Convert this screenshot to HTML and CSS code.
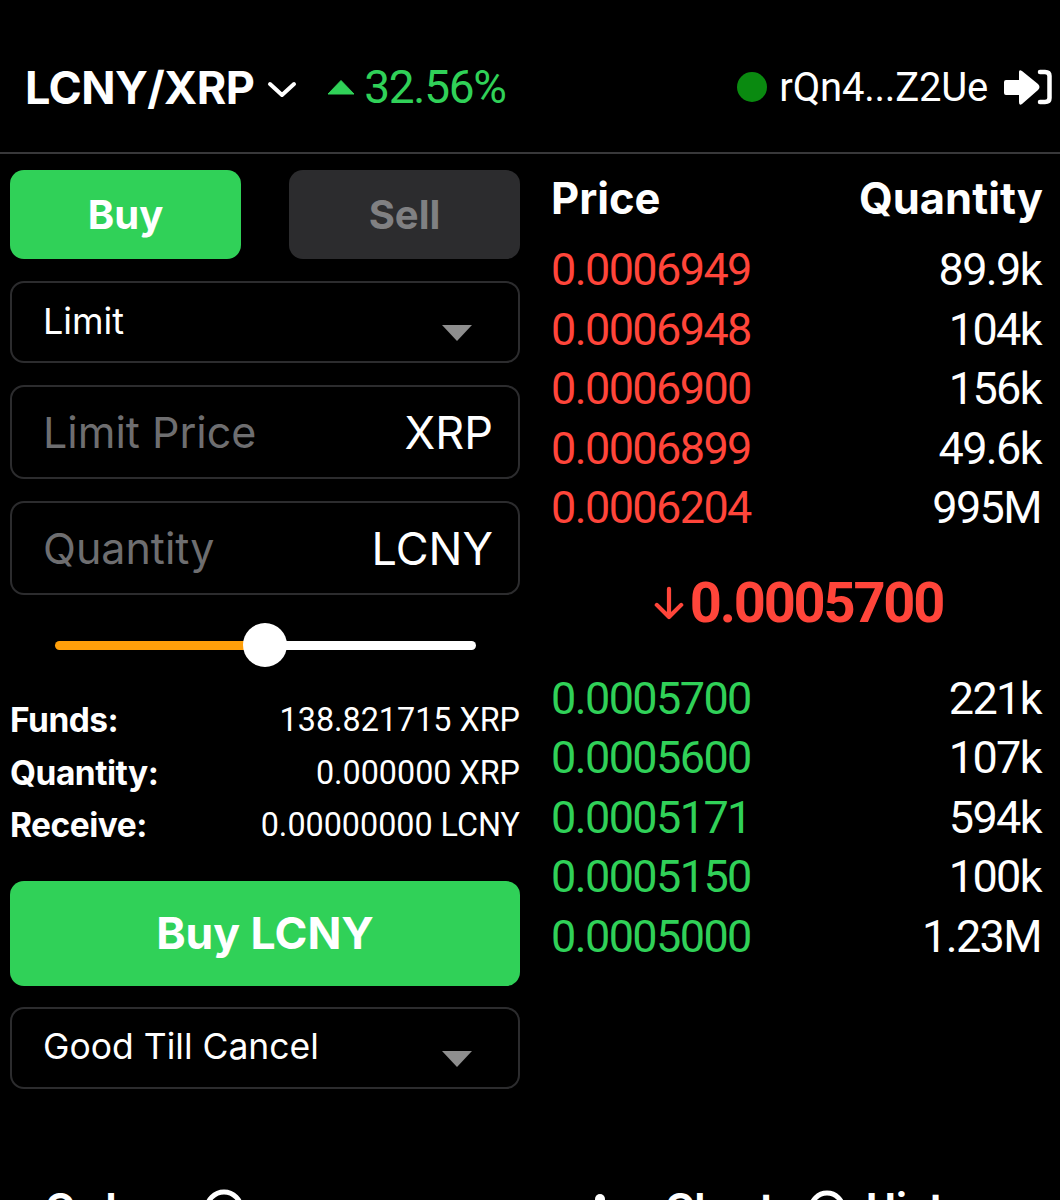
FILE: index.html
```html
<!DOCTYPE html>
<html>
<head>
<meta charset="utf-8">
<title>LCNY/XRP</title>
<link rel="stylesheet" href="styles.css">
</head>
<body>
<header class="topbar">
  <div class="pair">LCNY/XRP</div>
  <svg class="pair-caret" width="30" height="18" viewBox="0 0 30 18"><path d="M3 4 L15 15 L27 4" fill="none" stroke="#fff" stroke-width="4" stroke-linecap="round" stroke-linejoin="round"/></svg>
  <svg class="up-tri" width="28" height="16" viewBox="0 0 28 16"><path d="M14 1.5 L27 15 H1 Z" fill="#30d158" stroke="#30d158" stroke-linejoin="round"/></svg>
  <div class="change">32.56%</div>
  <div class="wallet">
    <span class="dot"></span>
    <span class="addr">rQn4...Z2Ue</span>
    <svg class="logout" width="48" height="36" viewBox="0 0 48 36"><path d="M2 11 H15 V3 Q15 0 18 2 L34 15 Q37 18 34 21 L18 35 Q15 37 15 33 V26 H2 Q0 26 0 24 V13 Q0 11 2 11 Z" fill="#fff"/><path d="M36 3 H41 Q45.500 3 45.500 7 V29 Q45.500 33 41 33 H36" fill="none" stroke="#fff" stroke-width="4.500" stroke-linecap="round"/></svg>
  </div>
</header>

<main class="layout">
  <section class="form">
    <div class="tabs">
      <button class="tab tab-buy">Buy</button>
      <button class="tab tab-sell">Sell</button>
    </div>
    <div class="select select-type"><span>Limit</span><i class="select-arrow"></i></div>
    <div class="field"><span class="placeholder">Limit Price</span><span class="unit">XRP</span></div>
    <div class="field"><span class="placeholder">Quantity</span><span class="unit">LCNY</span></div>
    <div class="slider">
      <div class="track-on"></div>
      <div class="thumb"></div>
      <div class="track-off"></div>
    </div>
    <dl class="summary">
      <div class="summary-row"><dt>Funds:</dt><dd>138.821715 XRP</dd></div>
      <div class="summary-row"><dt>Quantity:</dt><dd>0.000000 XRP</dd></div>
      <div class="summary-row"><dt>Receive:</dt><dd>0.00000000 LCNY</dd></div>
    </dl>
    <button class="submit">Buy LCNY</button>
    <div class="select select-tif"><span>Good Till Cancel</span><i class="select-arrow"></i></div>
  </section>

  <section class="book">
    <div class="book-head"><span>Price</span><span>Quantity</span></div>
    <ul class="rows asks">
      <li><span>0.0006949</span><b>89.9k</b></li>
      <li><span>0.0006948</span><b>104k</b></li>
      <li><span>0.0006900</span><b>156k</b></li>
      <li><span>0.0006899</span><b>49.6k</b></li>
      <li><span>0.0006204</span><b>995M</b></li>
    </ul>
    <div class="last">
      <svg width="30" height="34" viewBox="0 0 32 36"><path d="M16 3 V32 M3 20 L16 33 L29 20" fill="none" stroke="#ff453a" stroke-width="4.500" stroke-linecap="round" stroke-linejoin="round"/></svg>
      <span>0.0005700</span>
    </div>
    <ul class="rows bids">
      <li><span>0.0005700</span><b>221k</b></li>
      <li><span>0.0005600</span><b>107k</b></li>
      <li><span>0.0005171</span><b>594k</b></li>
      <li><span>0.0005150</span><b>100k</b></li>
      <li><span>0.0005000</span><b>1.23M</b></li>
    </ul>
  </section>
</main>

<nav class="tabbar">
  <div class="nav-item nav-orders">
    <span>Orders</span>
    <svg class="nav-icon" width="46" height="40" viewBox="0 0 46 40"><circle cx="23" cy="20" r="17" fill="none" stroke="#fff" stroke-width="5"/></svg>
  </div>
  <div class="nav-item nav-charts">
    <svg class="nav-dot" width="14" height="40" viewBox="0 0 14 40"><circle cx="7" cy="6" r="5" fill="#fff"/></svg>
    <span>Charts</span>
  </div>
  <div class="nav-item nav-history">
    <svg class="nav-icon" width="38" height="40" viewBox="0 0 38 40"><circle cx="19" cy="20" r="16" fill="none" stroke="#fff" stroke-width="5"/></svg>
    <span>History</span>
  </div>
</nav>
</body>
</html>
```

FILE: styles.css
```css
html, body { margin: 0; padding: 0; background: #000; height: 1200px; overflow: hidden; }
body { font-family: "Roboto", "Liberation Sans", sans-serif; color: #fff; }
ul, dl, dd { margin: 0; padding: 0; list-style: none; }
button { font-family: inherit; border: 0; padding: 0; color: inherit; }

.topbar { display: flex; align-items: center; height: 154px; padding: 22px 8px 0 25px; box-sizing: border-box; border-bottom: 2px solid #38383a; }
.pair { font-family: "Inter", sans-serif; font-weight: 700; font-size: 45px; letter-spacing: -0.6px; }
.pair-caret { margin-left: 13px; margin-top: 4px; }
.up-tri { margin-left: 30px; margin-top: 0; }
.change { font-size: 46px; color: #30d158; margin-left: 9px; letter-spacing: -1.3px; }
.wallet { display: flex; align-items: center; margin-left: auto; }
.dot { width: 30px; height: 30px; border-radius: 50%; background: #0a8a10; }
.addr { font-size: 40px; margin-left: 12px; letter-spacing: -0.2px; }
.logout { margin-left: 16px; }

.layout { display: flex; padding: 16px 17px 0 10px; gap: 31px; }
.form { width: 510px; flex: none; }
.tabs { display: flex; justify-content: space-between; }
.tab { width: 231px; height: 89px; border-radius: 14px; font-family: "Inter", sans-serif; font-weight: 700; font-size: 40px; }
.tab-buy { background: #30d158; }
.tab-sell { background: #2c2c2e; color: #808082; }

.select, .field { display: flex; box-sizing: border-box; border: 2px solid #2c2c2e; border-radius: 14px; padding: 0 25px 0 31px; font-family: "Inter", sans-serif; }
.select { height: 82px; font-size: 36px; position: relative; align-items: center; padding-bottom: 2px; }
.select-type { margin-top: 22px; }
.select-arrow { position: absolute; top: 42px; right: 46px; width: 0; height: 0; border-left: 15px solid transparent; border-right: 15px solid transparent; border-top: 16px solid #8e8e8e; }
.field { height: 94px; align-items: center; justify-content: space-between; margin-top: 22px; font-size: 43px; }
.placeholder { color: #6e6e70; }
.unit { font-size: 45px; }

.slider { display: flex; align-items: center; margin: 28px 44px 0 45px; height: 44px; }
.track-on { width: 190px; height: 9px; background: #ff9f0a; border-radius: 5px 0 0 5px; }
.thumb { width: 44px; height: 44px; border-radius: 50%; background: #fff; flex: none; margin-left: -2px; }
.track-off { flex: 1; height: 9px; background: #fff; border-radius: 0 5px 5px 0; margin-left: -2px; }

.summary { margin-top: 27px; }
.summary-row { display: flex; justify-content: space-between; align-items: center; height: 52.5px; font-size: 32.3px; }
.summary-row dt { font-family: "Inter", sans-serif; font-weight: 700; font-size: 33.5px; letter-spacing: -0.5px; }
.summary-row dd { font-weight: 400; }

.submit { display: block; width: 100%; height: 105px; border-radius: 14px; background: #30d158; margin-top: 29px; font-family: "Inter", sans-serif; font-weight: 700; font-size: 44.5px; }
.select-tif { margin-top: 21px; font-size: 35.5px; }

.book { flex: 1; }
.book-head { display: flex; justify-content: space-between; font-family: "Inter", sans-serif; font-weight: 700; font-size: 43.5px; height: 56px; align-items: center; }
.rows li { display: flex; justify-content: space-between; align-items: center; height: 59.5px; padding-right: 2px; font-size: 45px; letter-spacing: -1.6px; }
.rows b { font-weight: 400; color: #fff; }
.asks { margin-top: 14px; color: #ff453a; }
.bids { color: #30d158; }
.last { display: flex; align-items: center; justify-content: center; height: 131px; color: #ff453a; font-size: 56px; font-weight: 700; letter-spacing: -2.2px; padding-left: 3px; }
.last svg { margin-right: 6px; }

.tabbar { display: flex; margin-top: 94px; padding-left: 45px; font-family: "Inter", sans-serif; font-weight: 700; font-size: 40px; }
.nav-item { display: flex; align-items: flex-start; flex: none; }
.nav-orders { width: 548px; gap: 22px; }
.nav-charts { width: 215px; gap: 58px; }
.nav-history { gap: 20px; }
.nav-icon { margin-top: 6px; }
.nav-dot { margin-top: 10px; }
```
